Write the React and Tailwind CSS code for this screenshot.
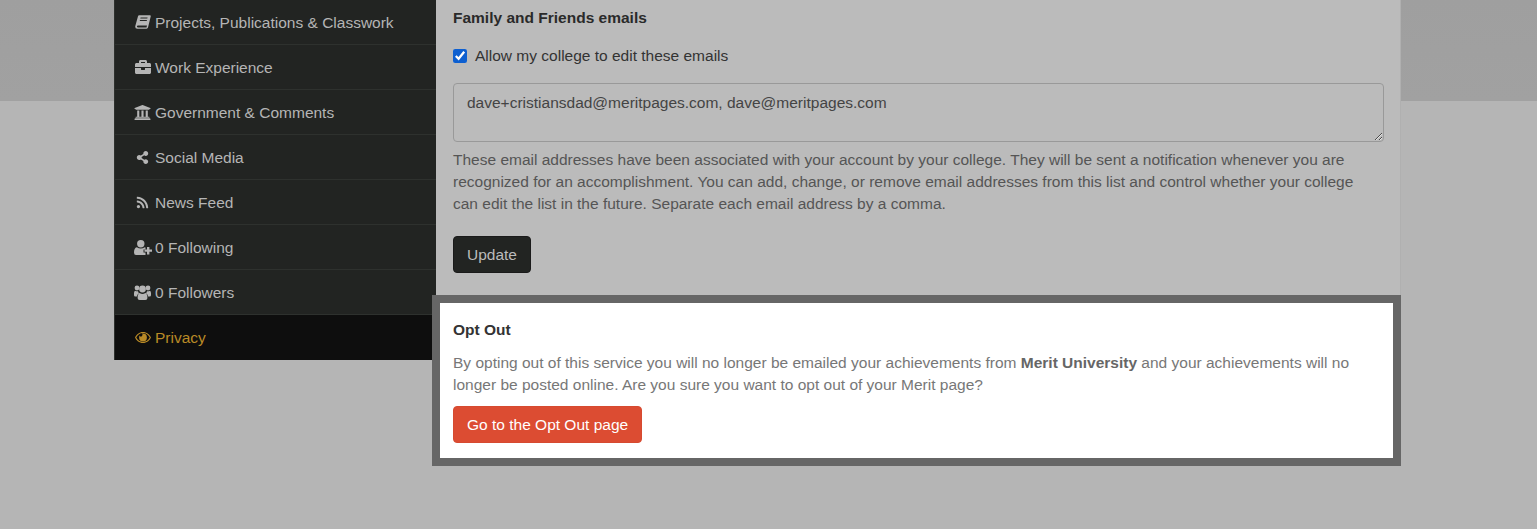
import { FaBriefcase, FaUniversity, FaShareAlt, FaRss } from 'react-icons/fa';

// Font Awesome 4 shapes the package no longer has
function BookIcon() {
  return (
    <svg viewBox="0 0 16 14" className="h-[14px] w-[16px]" fill="currentColor" fillRule="evenodd">
      <path d="M4.2.3H15q1 0 .7 1.2L13 12.6q-.3 1.1-1.4 1.1H2.2Q-.2 13.7.3 11L3 1.3Q3.2.3 4.2.3ZM5.6 2.6l-.3 1h7l.3-1ZM5 4.9l-.3 1h7l.3-1ZM3 10.4q-1 0-1.1 1t.9 1h8.700l.5-2Z" />
    </svg>
  );
}

function UserPlusIcon() {
  return (
    <svg viewBox="0 0 18 15" className="h-[15px] w-[18px]" fill="currentColor">
      <circle cx="6.800" cy="3.700" r="3.700" />
      <path d="M0 12.500Q0 8 2.800 7.300q4 2.600 8 0l.7.300V9.500H9.500v3h2v2.500H2Q0 15 0 12.500Z" />
      <path d="M13 7h2.400v2.500H18v2.300h-2.600v2.600H13v-2.600h-2.500V9.500H13Z" />
    </svg>
  );
}

function UsersIcon() {
  return (
    <svg viewBox="0 0 17 15" className="h-[15px] w-[17px]" fill="currentColor">
      <circle cx="3" cy="3" r="2.400" />
      <circle cx="14" cy="3" r="2.400" />
      <circle cx="8.500" cy="4" r="3.400" />
      <path d="M0 8Q0 6 1.300 5.700q1.300 1 2.700.5.300 1.300 1.100 2-2 .8-2.200 3.300H1.300Q0 11.500 0 10Z" />
      <path d="M17 8q0-2-1.300-2.300-1.300 1-2.700.5-.3 1.300-1.100 2 2 .8 2.200 3.300h1.600q1.300 0 1.300-1.500Z" />
      <path d="M3.600 13Q3.600 8.800 5.600 8q2.900 2 5.800 0 2 .8 2 5 0 2-2 2H5.600q-2 0-2-2Z" />
    </svg>
  );
}

function EyeIcon() {
  return (
    <svg viewBox="0 0 16 11" className="h-[11px] w-[16px]" fill="currentColor" fillRule="evenodd">
      <path d="M8 0c3.800 0 6.700 2.500 8 5.500C14.700 8.500 11.800 11 8 11S1.300 8.500 0 5.500C1.300 2.500 4.200 0 8 0ZM8 1.100C5 1.100 2.600 3 1.300 5.500 2.600 8 5 9.900 8 9.900s5.400-1.900 6.700-4.400C13.400 3 11 1.100 8 1.100Z" />
      <path d="M8 1.600a3.900 3.900 0 1 1-3.900 3.900q0-1 .5-1.900a1.500 1.500 0 1 0 2-2Q7.300 1.600 8 1.600Z" />
    </svg>
  );
}

const menu = [
  { label: 'Projects, Publications & Classwork', icon: <BookIcon /> },
  { label: 'Work Experience', icon: <FaBriefcase className="text-[16px]" /> },
  { label: 'Government & Comments', icon: <FaUniversity className="text-[17px]" /> },
  { label: 'Social Media', icon: <FaShareAlt className="text-[13px]" /> },
  { label: 'News Feed', icon: <FaRss className="text-[13px]" /> },
  { label: '0 Following', icon: <UserPlusIcon /> },
  { label: '0 Followers', icon: <UsersIcon /> },
];

function App() {
  return (
    <div className="h-[529px] overflow-hidden bg-[linear-gradient(to_bottom,#9f9f9f_0,#a1a1a1_101px,#b5b5b5_101px)] pl-[114px] font-['Liberation_Sans',Arial,sans-serif] text-[15.5px]">
      <div className="flex w-[1287px] items-start">
        {/* Sidebar */}
        <div className="w-[322px] shrink-0 border-l border-[#2e312e] bg-[#222422] text-[#b5b5b5]">
          {menu.map((item) => (
            <div key={item.label} className="flex h-[45px] items-center border-b border-[#2e312e]">
              <span className="flex w-[40px] shrink-0 justify-center pl-[15px]">{item.icon}</span>
              <span className="pt-[1px]">{item.label}</span>
            </div>
          ))}
          <div className="flex h-[45px] items-center bg-[#0e0e0e] text-[#b98a26]">
            <span className="flex w-[40px] shrink-0 justify-center pl-[15px]">
              <EyeIcon />
            </span>
            <span className="pt-[1px]">Privacy</span>
          </div>
        </div>

        {/* Main column */}
        <div className="w-[965px] shrink-0">
          <div className="h-[295px] border-r border-[#b0b0b0] bg-[#bbbbbb] pl-[17px] pr-[16px]">
            <h3 className="pt-[9px] leading-[18px] font-bold text-[#2a2a2a]">Family and Friends emails</h3>
            <label className="mt-[20px] flex h-[18px] items-center text-[#333]">
              <input type="checkbox" defaultChecked className="m-0 h-[14px] w-[14px] accent-[#0d5fd0]" />
              <span className="pl-[8px]">Allow my college to edit these emails</span>
            </label>
            <textarea
              readOnly
              defaultValue="dave+cristiansdad@meritpages.com, dave@meritpages.com"
              className="mt-[18px] block h-[59px] w-[931px] rounded-[4px] border border-[#999] bg-transparent px-[13px] py-[8px] leading-[22px] text-[#444] outline-none"
            />
            <p className="mt-[7px] w-[915px] leading-[22px] text-[#555]">
              These email addresses have been associated with your account by your college. They will be sent a notification whenever you are recognized for an accomplishment. You can add, change, or remove email addresses from this list and control whether your college can edit the list in the future. Separate each email address by a comma.
            </p>
            <button className="mt-[21px] h-[37px] rounded-[4px] border border-[#1a1a1a] bg-[#222422] px-[13px] pt-[1px] text-[#bbb]">
              Update
            </button>
          </div>

          {/* Opt out box sits over the dimmed page */}
          <div className="relative -ml-[4px] h-[171px] w-[969px] border-[8px] border-[#666] bg-white px-[13px]">
            <h3 className="pt-[18px] leading-[18px] font-bold text-[#333]">Opt Out</h3>
            <p className="mt-[13px] leading-[22px] text-[#777]">
              By opting out of this service you will no longer be emailed your achievements from <strong className="font-bold text-[#666]">Merit University</strong> and your achievements will no longer be posted online. Are you sure you want to opt out of your Merit page?
            </p>
            <button className="mt-[10px] h-[37px] rounded-[4px] border border-[#d64a30] bg-[#dc4c32] px-[13px] pt-[1px] text-white">
              Go to the Opt Out page
            </button>
          </div>
        </div>
      </div>
    </div>
  );
}

export default App;
